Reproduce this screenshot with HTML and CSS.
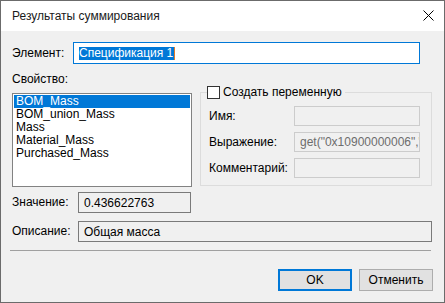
FILE: index.html
```html
<!DOCTYPE html>
<html lang="ru">
<head>
<meta charset="utf-8">
<link rel="stylesheet" href="styles.css">
</head>
<body>
<div class="window">
  <div class="titlebar">
    <span class="title">Результаты суммирования</span>
    <svg class="close" width="11" height="11" viewBox="0 0 11 11"><path d="M0.5 0.5 L10.5 10.5 M10.5 0.5 L0.5 10.5" stroke="#000" stroke-width="1" fill="none"/></svg>
  </div>
  <div class="content">
    <div class="row elem-row">
      <span class="lbl lbl-elem">Элемент:</span>
      <div class="field focus"><span class="sel">Спецификация 1</span><span class="caret"></span></div>
    </div>
    <div class="mid">
      <div class="left">
        <div class="lbl prop-lbl">Свойство:</div>
        <div class="list">
          <div class="item selected">BOM_Mass</div>
          <div class="item">BOM_union_Mass</div>
          <div class="item">Mass</div>
          <div class="item">Material_Mass</div>
          <div class="item">Purchased_Mass</div>
        </div>
      </div>
      <div class="group">
        <div class="legend"><span class="checkbox"></span><span>Создать переменную</span></div>
        <div class="grow"><span class="glbl">Имя:</span><div class="gfield"></div></div>
        <div class="grow"><span class="glbl">Выражение:</span><div class="gfield"><span class="gtext">get("0x10900000006","BOM_Mass")</span></div></div>
        <div class="grow"><span class="glbl">Комментарий:</span><div class="gfield"></div></div>
      </div>
    </div>
    <div class="row val-row">
      <span class="lbl lbl-val">Значение:</span>
      <div class="field ro val-field">0.436622763</div>
    </div>
    <div class="row desc-row">
      <span class="lbl lbl-val">Описание:</span>
      <div class="field ro desc-field">Общая масса</div>
    </div>
    <div class="sep"></div>
    <div class="buttons">
      <button class="btn ok">OK</button>
      <button class="btn">Отменить</button>
    </div>
  </div>
</div>
</body>
</html>
```

FILE: styles.css
```css
* { box-sizing: border-box; }
html, body { margin: 0; padding: 0; }
body {
  font-family: "Liberation Sans", Arial, sans-serif;
  font-size: 12px;
  color: #000;
  background: #f0f0f0;
}
.window {
  width: 445px;
  height: 303px;
  border: 1px solid #6b6b6b;
  background: #f0f0f0;
  overflow: hidden;
}
.titlebar {
  height: 30px;
  background: #fff;
  display: flex;
  align-items: center;
  justify-content: space-between;
  padding: 0 10px 0 11px;
}
.title {
  font-size: 12px;
  color: #1a1a1a;
  line-height: 16px;
  margin-top: -1px;
}
.close { display: block; margin-top: -2px; }
.content {
  padding: 11px 11px 0 11px;
}
.row {
  display: flex;
  align-items: center;
}
.lbl { line-height: 15px; white-space: nowrap; }
.elem-row { height: 22px; }
.lbl-elem { width: 61px; }
.field {
  border: 1px solid #7a7a7a;
  height: 100%;
  display: flex;
  align-items: center;
  white-space: nowrap;
  overflow: hidden;
}
.focus {
  width: 347px;
  border-color: #0078d7;
  background: #fff;
  padding-left: 5px;
}
.sel {
  background: #0078d7;
  color: #fff;
  line-height: 13px;
  padding-right: 1px;
}
.caret {
  width: 1px;
  height: 13px;
  background: #e07a2a;
}
.mid {
  display: flex;
  align-items: flex-start;
}
.left { width: 180px; }
.prop-lbl { margin-top: 8px; height: 15px; }
.list {
  margin-top: 6px;
  height: 94px;
  border: 1px solid #828282;
  background: #fff;
  padding: 1px;
}
.item {
  height: 13px;
  line-height: 13px;
  padding-left: 2px;
  white-space: nowrap;
}
.item.selected {
  background: #0078d7;
  color: #fff;
}
.group {
  position: relative;
  margin-left: 8px;
  margin-top: 28px;
  width: 232px;
  height: 94px;
  border: 1px solid #dcdcdc;
  padding: 13px 11px 7px 8px;
  display: flex;
  flex-direction: column;
  gap: 6px;
}
.legend {
  position: absolute;
  top: -7px;
  left: 6px;
  display: flex;
  align-items: center;
  gap: 3px;
  background: #f0f0f0;
  padding-right: 3px;
  line-height: 13px;
  white-space: nowrap;
}
.checkbox {
  width: 13px;
  height: 13px;
  border: 1px solid #333;
  background: #fff;
}
.grow {
  display: flex;
  align-items: center;
  height: 20px;
}
.glbl { width: 85px; white-space: nowrap; }
.gfield {
  width: 126px;
  height: 20px;
  border: 1px solid #cccccc;
  background: #f0f0f0;
  overflow: hidden;
  white-space: nowrap;
  padding-left: 5px;
  display: flex;
  align-items: center;
}
.gtext { color: #6d6d6d; }
.val-row { margin-top: 5px; height: 21px; }
.lbl-val { width: 66px; }
.ro { background: #f0f0f0; padding-left: 5px; }
.val-field { width: 113px; }
.desc-row { margin-top: 8px; height: 21px; }
.desc-field { width: 354px; }
.sep {
  margin-top: 8px;
  margin-left: -2px;
  width: 421px;
  height: 1px;
  background: #a0a0a0;
}
.buttons {
  margin-top: 18px;
  display: flex;
  justify-content: flex-end;
  gap: 7px;
}
.btn {
  width: 74px;
  height: 22px;
  font-family: inherit;
  font-size: 12px;
  color: #000;
  background: #e1e1e1;
  border: 1px solid #adadad;
  padding: 0;
  margin: 0;
  line-height: 18px;
}
.btn.ok {
  border: 2px solid #0078d7;
}
```
